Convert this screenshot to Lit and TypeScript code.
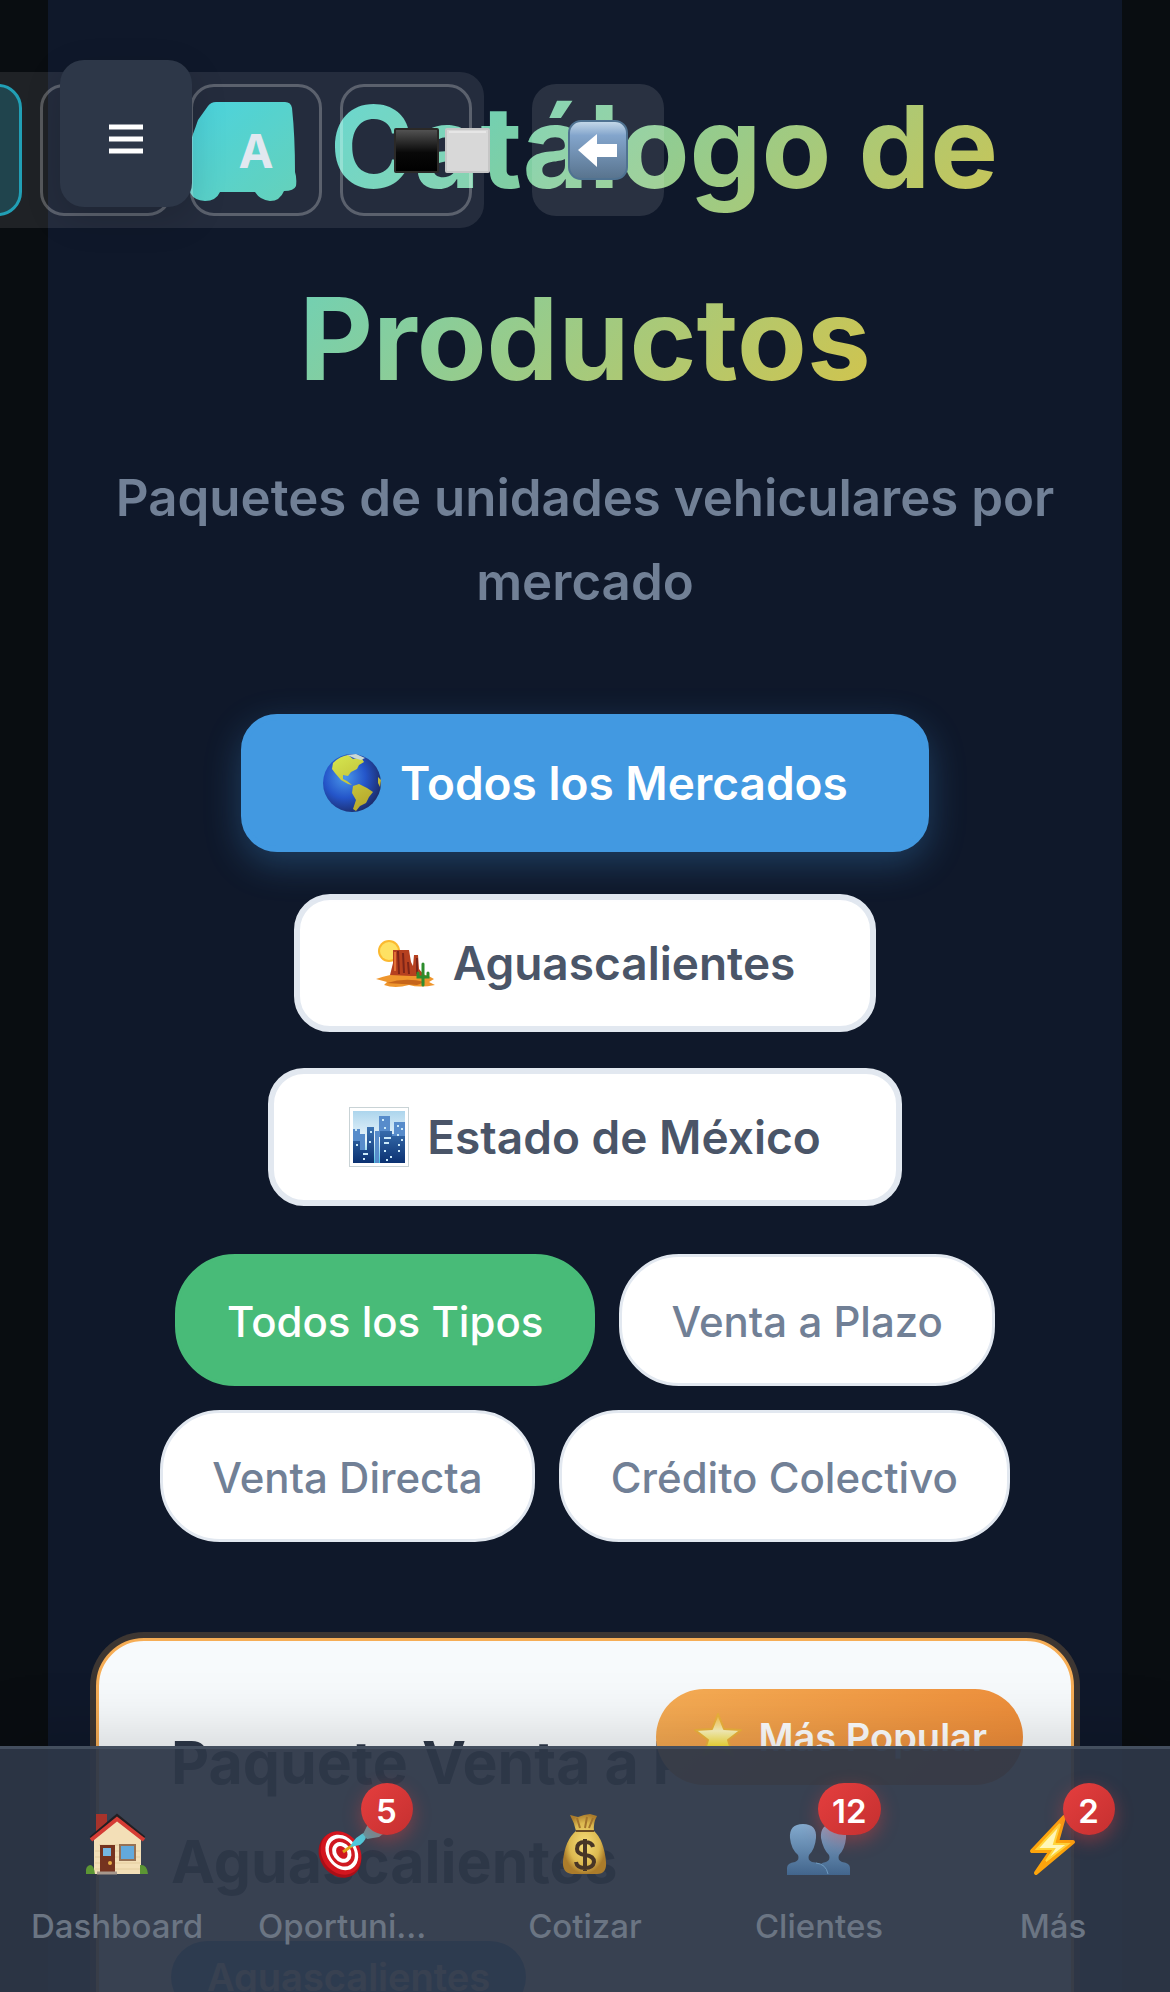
import { LitElement, html, css, svg } from "lit";
import { customElement, state } from "lit/decorators.js";
import { classMap } from "lit/directives/class-map.js";

const van = svg`
  <defs><linearGradient id="paint" x2="1" y2="1"><stop offset="0" stop-color="#38cfdc"/><stop offset="1" stop-color="#57cdb3"/></linearGradient></defs>
  <path d="M17 88 C17 60 17 42 21 32 Q24 24 26 18 L36 4 Q39 0 44 0 H113 Q119 0 120 6 Q123 34 123 70 Q125 76 124 84 Q122 89 112 89 Q108 99 98 99 Q88 98 83 90 H48 Q44 99 33 99 Q22 98 19 92Z" fill="url(#paint)"/>`;

const globe = svg`
  <defs><radialGradient id="sea" cx=".38" cy=".4" r=".65"><stop offset="0" stop-color="#4a97ea"/><stop offset=".55" stop-color="#2455c9"/><stop offset="1" stop-color="#1c2c6c"/></radialGradient>
  <linearGradient id="land" x2=".5" y2="1"><stop offset="0" stop-color="#d5e850"/><stop offset="1" stop-color="#b8a92c"/></linearGradient></defs>
  <circle cx="30" cy="30" r="29" fill="url(#sea)"/>
  <path d="M11 10 Q18 3 26 2 L31 6 L39 4 L42 9 L37 12 L35 16 L29 19 L26 23 L21 22 L21 26 L25 28 L30 32 L26 31 L19 27 L13 20 L10 16Z M31 33 L37 31 L45 35 L51 39 L47 44 L44 50 L38 53 L34 58 L31 56 L34 47 L30 40Z M56 24 L59 27 L58 34 L56 30Z" fill="url(#land)"/>
  <path d="M25 2 L34 1 L43 5 L39 7 L32 5Z" fill="#c9d9d4"/>`;

const desert = svg`
  <circle cx="14" cy="18" r="11" fill="#fbb92f"/><circle cx="14" cy="18" r="9" fill="#fee163"/>
  <path d="M1 46 Q15 41 30 40 Q50 39 59 46 L54 49 L60 52 Q45 55 34 52 Q20 56 9 52 L12 49Z" fill="#ef962d"/>
  <path d="M12 50 Q30 44 50 49 L42 52Z" fill="#c6651b"/>
  <path d="M15 42 L18 30 L18 17 L34 17 L36 29 L38 33 L39 22 L43 22 L44 36 L50 43 L36 43Z" fill="#b6401f"/>
  <path d="M23 18 L24 41 M28 20 L29 40 M33 29 L34 41 M42 25 L42 41" stroke="#7d2418" stroke-width="2"/>
  <path d="M20 19 L20 38" stroke="#e17035" stroke-width="2"/>
  <path d="M48 52 V31 M43 40 V44 H48 M53 40 V44 H48" stroke="#2d8d2d" stroke-width="3" fill="none" stroke-linecap="round"/>`;

const city = svg`
  <defs><linearGradient id="sky" x2="0" y2="1"><stop offset="0" stop-color="#acd5ed"/><stop offset=".55" stop-color="#eaf5fb"/><stop offset="1" stop-color="#48c3e6"/></linearGradient>
  <linearGradient id="tower" x2="0" y2="1"><stop offset="0" stop-color="#3b73b3"/><stop offset="1" stop-color="#0b3171"/></linearGradient></defs>
  <rect x=".5" y=".5" width="59" height="59" fill="#fff" stroke="#c9d3d6"/>
  <rect x="4" y="4" width="52" height="52" fill="url(#sky)"/>
  <path d="M4 22H11V27H16V56H4Z M30 9H41V30H30Z M45 15H56V56H42V27H45Z M26 24H30V56H26Z" fill="#578ccb"/>
  <path d="M4 34H11V43H18V20H25V56H4Z M31 24H43V29H56V56H31Z" fill="url(#tower)"/>
  <path d="M6 23h2M33 13h2M35 21h2M21 25h2M20 35h2M35 31h7M48 19h2M52 22h2M48 28h2M52 33h2M35 36h5M7 38h2M14 47h5M14 52h2M35 44h2M41 50h2M49 44h2M37 53h2M49 38h2" stroke="#cbeaf9" stroke-width="2"/>`;

const star = svg`
  <defs><linearGradient id="gold" x2="0" y2="1"><stop offset="0" stop-color="#f5b83c"/><stop offset=".4" stop-color="#fdf6bd"/><stop offset=".75" stop-color="#f8e13f"/><stop offset="1" stop-color="#eba816"/></linearGradient></defs>
  <path d="M26 2 L32 17 L49 18 L36 28 L41 44 L26 35 L11 44 L16 28 L3 18 L20 17Z" fill="url(#gold)" stroke="#eeb33c" stroke-width="2" stroke-linejoin="round"/>`;

const back = svg`
  <defs><linearGradient id="key" x2="0" y2="1"><stop offset="0" stop-color="#c8dbea"/><stop offset=".25" stop-color="#83a5cc"/><stop offset="1" stop-color="#58738d"/></linearGradient></defs>
  <rect x="1" y="1" width="58" height="58" rx="12" fill="url(#key)" stroke="#4f7291" stroke-width="2"/>
  <path d="M10 30 L29 14 V24 H49 V37 H29 V47Z" fill="#fff"/>`;

const squares = svg`
  <defs><linearGradient id="ink" x2="0" y2="1"><stop offset="0" stop-color="#555"/><stop offset=".55" stop-color="#080808"/><stop offset="1" stop-color="#000"/></linearGradient></defs>
  <rect x="1" y="1" width="43" height="43" rx="1" fill="url(#ink)" stroke="#2b2927" stroke-width="2"/>
  <rect x="52" y="1" width="43" height="43" rx="1" fill="#d8d8d8" stroke="#c6c6c6" stroke-width="2"/>
  <path d="M55 4H92" stroke="#e6e6e6" stroke-width="2"/>`;

const house = svg`
  <path d="M10 1H21V14L10 22Z" fill="#a8332b"/>
  <path d="M8 25 L32 5 L55 26 V61 H8Z" fill="#f3dfb7"/>
  <path d="M9 38H54M9 44H54M9 50H54M9 56H54M13 32H50" stroke="#e4cd9f"/>
  <path d="M5 25 L31 3 L58 25" fill="none" stroke="#221f23" stroke-width="4"/>
  <path d="M5 27 L31 6 L58 27" fill="none" stroke="#d53c34" stroke-width="4"/>
  <rect x="14" y="32" width="15" height="29" fill="#75331f"/><rect x="17" y="35" width="8" height="8" fill="#75b7e2"/><circle cx="24" cy="50" r="2" fill="#e4ae46"/>
  <rect x="34" y="32" width="15" height="15" fill="#62a9dc" stroke="#967154" stroke-width="2"/>
  <path d="M11 60H31" stroke="#a7988c" stroke-width="3"/>
  <path d="M0 61 Q-1 53 4 52 Q8 52 9 61Z M54 61 V52 Q61 51 62 61Z" fill="#5c9634"/>`;

const target = svg`
  <g transform="rotate(-35 21 40)"><ellipse cx="19" cy="41" rx="20" ry="24" fill="#a90f18"/><ellipse cx="21" cy="40" rx="19" ry="23" fill="#d3161f"/><ellipse cx="22" cy="40" rx="15" ry="19" fill="#fff"/><ellipse cx="22" cy="40" rx="12" ry="15" fill="#cf1820"/><ellipse cx="22" cy="40" rx="9" ry="11" fill="#fff"/><ellipse cx="22" cy="40" rx="5" ry="7" fill="#cf1820"/></g>
  <path d="M23 39 L33 32" stroke="#e0a318" stroke-width="3"/>
  <path d="M30 34 Q35 23 46 19 Q48 26 40 32Z" fill="#4dcbdd"/>
  <path d="M43 21 L48 11 L54 12 V15 L63 21 L59 24 L47 26Z" fill="#5b9aa4"/>`;

const money = svg`
  <defs><radialGradient id="bag"><stop offset="0" stop-color="#f7dd79"/><stop offset=".7" stop-color="#dcb950"/><stop offset="1" stop-color="#ab7c2b"/></radialGradient></defs>
  <path d="M16 2 L24 4 L30 2 L36 1 L43 3 Q39 10 40 18 Q50 27 52 49 Q53 61 43 61 H18 Q8 60 9 48 Q11 27 22 18 Q20 9 16 2Z" fill="url(#bag)"/>
  <path d="M22 18 H40" stroke="#694b25" stroke-width="2"/><path d="M23 5L26 15M33 4L31 15M39 5L35 15" stroke="#a3742c" stroke-width="2"/>
  <path d="M39 34 Q38 29 31 29 Q23 29 23 36 Q23 41 31 42 Q40 43 40 49 Q39 55 31 55 Q23 55 22 49 M31 26V58" fill="none" stroke="#473526" stroke-width="4"/>`;

const people = svg`
  <defs><linearGradient id="bust" x2="0" y2="1"><stop offset="0" stop-color="#83aace"/><stop offset="1" stop-color="#42658c"/></linearGradient></defs>
  <path d="M31 62 V55 Q31 50 38 49 Q43 47 41 42 Q35 36 33 25 Q32 11 45 11 Q59 11 58 25 Q57 36 51 42 Q49 47 54 49 Q62 50 62 55 V62Z" fill="url(#bust)"/>
  <path d="M-1 62 V55 Q-1 50 7 49 Q12 47 10 42 Q3 36 2 25 Q1 11 15 11 Q29 11 28 25 Q27 36 21 42 Q19 47 24 49 Q39 50 40 62Z" fill="url(#bust)"/>
  <path d="M28 50 Q38 51 40 61" fill="none" stroke="#6e9ac0"/>`;

const bolt = svg`
  <path d="M42 4 L10 38 H29 L14 60 L51 29 H35Z" fill="#fff7b8" stroke="#fca40c" stroke-width="4" stroke-linejoin="round"/>
  <path d="M38 11 L15 36 H32 L24 48 L46 31 H32Z" fill="#fff7b8" stroke="#ffd53a" stroke-width="2"/>`;

const burger = svg`<path d="M0 3H34M0 15H34M0 27H34" stroke="#fff" stroke-width="5"/>`;

const art = (shape: unknown, w: number, h: number, name: string) =>
  html`<svg class=${name} viewBox="0 0 ${w} ${h}" aria-hidden="true">${shape}</svg>`;

@customElement("app-root")
export class AppRoot extends LitElement {
  @state() private market = 0;
  @state() private type = 0;

  private markets = [
    { label: "Todos los Mercados", icon: globe },
    { label: "Aguascalientes", icon: desert },
    { label: "Estado de México", icon: city },
  ];
  private types = ["Todos los Tipos", "Venta a Plazo", "Venta Directa", "Crédito Colectivo"];
  private links = [
    { label: "Dashboard", icon: house, count: 0 },
    { label: "Oportunidades", icon: target, count: 5 },
    { label: "Cotizar", icon: money, count: 0 },
    { label: "Clientes", icon: people, count: 12 },
    { label: "Más", icon: bolt, count: 2 },
  ];

  static styles = css`
    :host {
      display: block;
      height: 100vh;
      overflow: hidden;
      position: relative;
      background: #090d11;
      font-family: Inter, "Liberation Sans", sans-serif;
    }
    * { box-sizing: border-box; }
    button { font: inherit; cursor: pointer; padding: 0; margin: 0; }
    svg { flex: none; display: block; overflow: visible; }

    .page {
      margin: 0 48px;
      padding: 51px 48px 0;
      min-height: 100%;
      background: #0f182a;
    }
    .heading { text-align: center; }
    h1 {
      margin: 0;
      font-size: 114px;
      line-height: 192px;
      font-weight: 700;
      background: linear-gradient(135deg, #4ed5d9 14%, #d9c345 86%);
      -webkit-background-clip: text;
      background-clip: text;
      color: transparent;
    }
    .van { display: inline-block; width: 126px; height: 100px; margin-right: 32px; vertical-align: -14px; }
    .lead {
      margin: 21px 0 0;
      font-size: 51px;
      line-height: 84px;
      font-weight: 600;
      color: #718096;
    }
    .markets {
      margin-top: 96px;
      display: flex;
      flex-direction: column;
      align-items: center;
      gap: 36px;
    }
    .market {
      display: flex;
      align-items: center;
      gap: 18px;
      height: 138px;
      padding: 0 75px;
      border: 6px solid #e2e8f0;
      border-radius: 36px;
      background: #fff;
      color: #4a5568;
      font-size: 46px;
      font-weight: 600;
    }
    .market.on {
      background: #4299e1;
      border-color: #4299e1;
      color: #fff;
      transform: translateY(-6px);
      box-shadow: 0 12px 36px rgba(66, 153, 225, 0.3);
    }
    .market svg { width: 60px; height: 60px; }
    .types {
      margin-top: 48px;
      display: flex;
      flex-wrap: wrap;
      justify-content: center;
      gap: 24px;
    }
    .type {
      height: 132px;
      padding: 2px 49px 0;
      border: 3px solid #e2e8f0;
      border-radius: 60px;
      background: #fff;
      color: #718096;
      font-size: 42px;
      font-weight: 500;
    }
    .type.on { background: #48bb78; border-color: #48bb78; color: #fff; }

    .card {
      position: relative;
      margin-top: 96px;
      height: 600px;
      padding: 72px;
      border: 3px solid #f6ad55;
      border-radius: 48px;
      background: #f7fafc;
      box-shadow: 0 0 0 6px rgba(246, 173, 85, 0.2);
    }
    h2 { margin: 0; font-size: 59px; line-height: 99px; font-weight: 700; color: #2d3748; }
    .popular {
      position: absolute;
      top: 48px;
      right: 48px;
      height: 96px;
      padding: 0 36px;
      display: flex;
      align-items: center;
      gap: 15px;
      border-radius: 60px;
      background: linear-gradient(135deg, #f6ad55, #ed8936);
      color: #fff;
      font-size: 38px;
      line-height: 48px;
      font-weight: 600;
    }
    .popular svg { width: 51px; height: 51px; }
    .place {
      display: inline-block;
      margin-top: 30px;
      padding: 12px 36px;
      border-radius: 60px;
      background: #3182ce;
      color: #fff;
      font-size: 38px;
      line-height: 48px;
      font-weight: 600;
    }

    .tools {
      position: absolute;
      top: 72px;
      left: -122px;
      display: flex;
      align-items: center;
      gap: 48px;
    }
    .themes {
      display: flex;
      gap: 18px;
      padding: 12px;
      border-radius: 24px;
      background: rgba(255, 255, 255, 0.09);
    }
    .tool {
      width: 132px;
      height: 132px;
      flex: none;
      display: flex;
      align-items: center;
      justify-content: center;
      border: 3px solid rgba(255, 255, 255, 0.25);
      border-radius: 24px;
      background: none;
      color: #e2e8f0;
      font-size: 47px;
      font-weight: 700;
    }
    .tool.on { border-color: #219fb5; background: #20444d; }
    .tool.wide { justify-content: flex-start; padding-left: 51px; }
    .tool.back { border: 0; background: rgba(255, 255, 255, 0.11); }
    .squares { width: 96px; height: 45px; }
    .arrow { width: 60px; height: 60px; }
    .menu {
      position: absolute;
      top: 60px;
      left: 60px;
      width: 132px;
      height: 147px;
      display: flex;
      align-items: center;
      justify-content: center;
      padding-top: 10px;
      border: 0;
      border-radius: 24px;
      background: #2d3748;
      box-shadow: 0 12px 36px rgba(0, 0, 0, 0.15);
    }
    .lines { width: 34px; height: 30px; }

    nav {
      position: absolute;
      left: 0;
      right: 0;
      bottom: 0;
      height: 246px;
      display: grid;
      grid-template-columns: repeat(5, minmax(0, 1fr));
      border-top: 3px solid #434e5e;
      background: rgba(45, 55, 72, 0.95);
      box-shadow: 0 -12px 60px rgba(0, 0, 0, 0.15);
    }
    .link {
      display: flex;
      flex-direction: column;
      align-items: center;
      gap: 26px;
      padding: 64px 24px 0;
      color: #6b7583;
      text-decoration: none;
    }
    .icon { position: relative; display: block; }
    .glyph { width: 63px; height: 63px; }
    .count {
      position: absolute;
      top: -30px;
      right: -30px;
      min-width: 52px;
      height: 52px;
      padding: 0 14px;
      border-radius: 27px;
      background: linear-gradient(135deg, #e53e3e, #c53030);
      box-shadow: 0 6px 18px rgba(229, 62, 62, 0.4);
      color: #fff;
      font-size: 33px;
      line-height: 56px;
      font-weight: 600;
      text-align: center;
    }
    .label {
      max-width: 100%;
      overflow: hidden;
      text-overflow: ellipsis;
      white-space: nowrap;
      font-size: 33px;
      line-height: 48px;
      font-weight: 500;
    }
  `;

  render() {
    return html`
      <main class="page">
        <header class="heading">
          <h1>${art(van, 126, 100, "van")}Catálogo de Productos</h1>
          <p class="lead">Paquetes de unidades vehiculares por mercado</p>
        </header>
        <div class="markets">
          ${this.markets.map((m, i) => html`
            <button class=${classMap({ market: true, on: i === this.market })} @click=${() => (this.market = i)}>
              ${art(m.icon, 60, 60, "emoji")}<span>${m.label}</span>
            </button>`)}
        </div>
        <div class="types">
          ${this.types.map((t, i) => html`
            <button class=${classMap({ type: true, on: i === this.type })} @click=${() => (this.type = i)}>${t}</button>`)}
        </div>
        <article class="card">
          <h2>Paquete Venta a Plazo Aguascalientes</h2>
          <span class="place">Aguascalientes</span>
          <span class="popular">${art(star, 51, 51, "emoji")}Más Popular</span>
        </article>
      </main>
      <div class="tools">
        <div class="themes">
          <button class="tool on" aria-label="Tema 1"></button>
          <button class="tool" aria-label="Tema 2"></button>
          <button class="tool">A</button>
          <button class="tool wide" aria-label="Contraste">${art(squares, 96, 45, "squares")}</button>
        </div>
        <button class="tool back" aria-label="Volver">${art(back, 60, 60, "arrow")}</button>
      </div>
      <button class="menu" aria-label="Menú">${art(burger, 34, 30, "lines")}</button>
      <nav>
        ${this.links.map((l) => html`
          <a class="link" href="#">
            <span class="icon">
              ${art(l.icon, 63, 63, "glyph")}
              ${l.count ? html`<span class="count">${l.count}</span>` : ""}
            </span>
            <span class="label">${l.label}</span>
          </a>`)}
      </nav>
    `;
  }
}
